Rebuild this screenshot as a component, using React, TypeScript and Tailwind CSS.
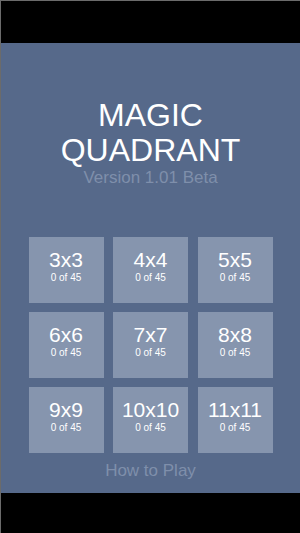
import React from "react";

const levels = ["3x3", "4x4", "5x5", "6x6", "7x7", "8x8", "9x9", "10x10", "11x11"];

export default function App() {
  return (
    <div
      className="w-[300px] h-[533px] bg-black flex flex-col border-t border-l border-[#6b6b6b] overflow-hidden"
      style={{ fontFamily: '"Liberation Sans", Arial, sans-serif' }}
    >
      <div className="h-[42px] shrink-0 bg-black" />
      <div className="h-[450px] shrink-0 bg-[#56698a] flex flex-col items-center">
        <div className="mt-[55px] text-white text-[32px] leading-[35px] text-center">
          <div>MAGIC</div>
          <div>QUADRANT</div>
        </div>
        <div className="text-[#7f8fab] text-[17px] leading-[20px]">Version 1.01 Beta</div>
        <div className="mt-[49px] grid grid-cols-[75px_75px_75px] gap-x-[9.5px] gap-y-[9px]">
          {levels.map((l) => (
            <div key={l} className="h-[66px] bg-[#8695ae] flex flex-col items-center pt-[11px] text-white">
              <div className="text-[21px] leading-[24px]">{l}</div>
              <div className="text-[10px] leading-[12px]">0 of 45</div>
            </div>
          ))}
        </div>
        <div className="mt-[8px] text-[#7f8fab] text-[17px] leading-[20px]">How to Play</div>
      </div>
      <div className="flex-1 bg-black" />
    </div>
  );
}
